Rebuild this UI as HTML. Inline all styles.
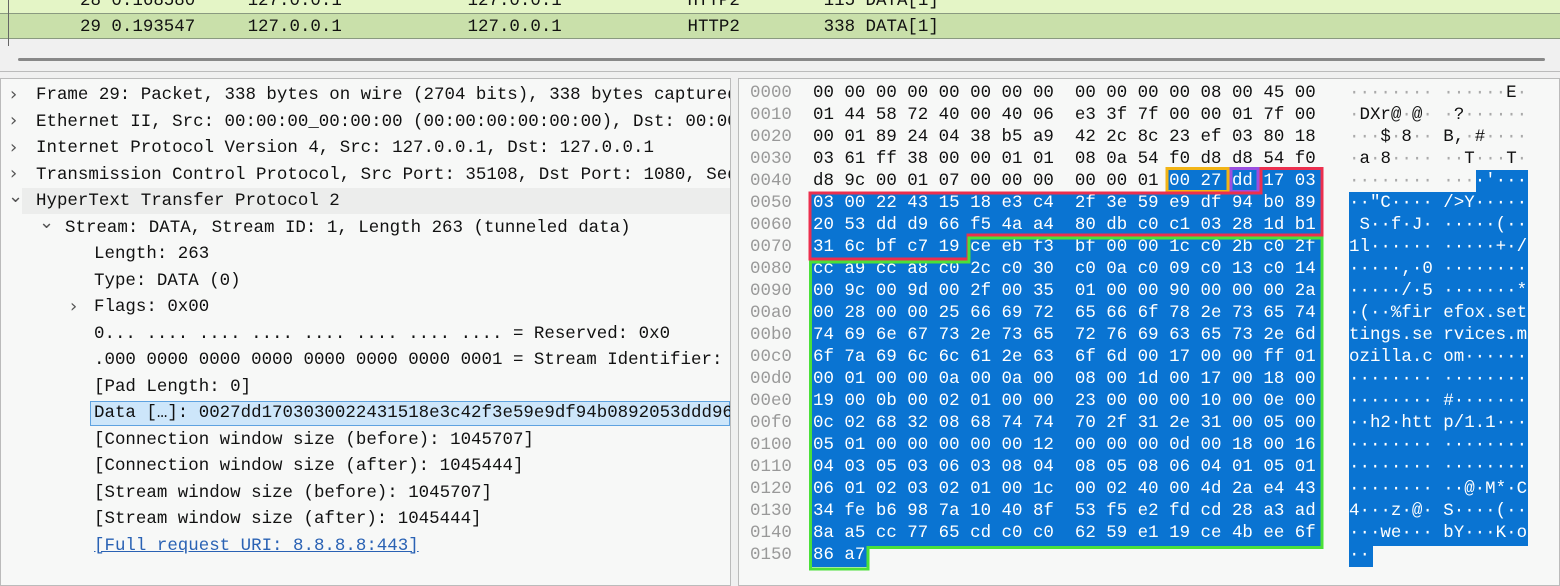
<!DOCTYPE html>
<html><head><meta charset="utf-8"><style>
*{margin:0;padding:0;box-sizing:border-box}
body{width:1560px;height:586px;overflow:hidden;background:#f0f0f0;position:relative;font-family:"Liberation Mono",monospace;font-size:17.47px;color:#111}
.a{position:absolute;white-space:pre;line-height:22px}
.t{position:absolute;white-space:pre;line-height:26px}
.w{color:#fff}
.g{color:#999}
.d{color:#aaa}
.ar{position:absolute;color:#555;font-family:"DejaVu Sans",sans-serif;font-size:18px;line-height:26px}
</style></head><body>
<!-- packet list -->
<div style="position:absolute;left:0;top:0;width:1560px;height:14px;background:#e4f5c6"></div>
<div style="position:absolute;left:0;top:13px;width:1560px;height:26px;background:#c9e0aa;border-top:1px solid #8a9a80;border-bottom:1px solid #8a9a80"></div>
<div style="position:absolute;left:0;top:40px;width:1560px;height:32px;background:#f0f0f0"></div>
<div style="position:absolute;left:8px;top:0;width:1px;height:46px;background:#666"></div>
<div class="t" style="left:80px;top:-12px">28 0.168580     127.0.0.1            127.0.0.1            HTTP2        115 DATA[1]</div>
<div class="t" style="left:80px;top:14px">29 0.193547     127.0.0.1            127.0.0.1            HTTP2        338 DATA[1]</div>
<div style="position:absolute;left:18px;top:58px;width:1527px;height:3px;background:#888;border-radius:2px"></div>
<div style="position:absolute;left:0;top:71px;width:1560px;height:1px;background:#bbb"></div>
<!-- left pane -->
<div style="position:absolute;left:0;top:78px;width:731px;height:508px;background:#f7f8f7;border:1px solid #bbb"></div>
<div style="position:absolute;left:22px;top:188px;width:708px;height:26px;background:#ecedec"></div>
<div style="position:absolute;left:90px;top:401px;width:640px;height:25px;background:#cde6fa;border:1px solid #5ea2e0"></div>
<div class="ar" style="left:10px;top:82px">›</div>
<div class="ar" style="left:10px;top:108px">›</div>
<div class="ar" style="left:10px;top:135px">›</div>
<div class="ar" style="left:10px;top:161px">›</div>
<div class="ar" style="left:8px;top:184px">⌄</div>
<div class="ar" style="left:39px;top:210px">⌄</div>
<div class="ar" style="left:70px;top:294px">›</div>
<div style="position:absolute;left:0;top:82px;width:730px;height:480px;overflow:hidden">
<div class="t" style="left:36px;top:0">Frame 29: Packet, 338 bytes on wire (2704 bits), 338 bytes captured</div>
<div class="t" style="left:36px;top:26.5px">Ethernet II, Src: 00:00:00_00:00:00 (00:00:00:00:00:00), Dst: 00:00</div>
<div class="t" style="left:36px;top:53px">Internet Protocol Version 4, Src: 127.0.0.1, Dst: 127.0.0.1</div>
<div class="t" style="left:36px;top:79.5px">Transmission Control Protocol, Src Port: 35108, Dst Port: 1080, Seq</div>
<div class="t" style="left:36px;top:106px">HyperText Transfer Protocol 2</div>
<div class="t" style="left:65px;top:132.5px">Stream: DATA, Stream ID: 1, Length 263 (tunneled data)</div>
<div class="t" style="left:94px;top:159px">Length: 263</div>
<div class="t" style="left:94px;top:185.5px">Type: DATA (0)</div>
<div class="t" style="left:94px;top:212px">Flags: 0x00</div>
<div class="t" style="left:94px;top:238.5px">0... .... .... .... .... .... .... .... = Reserved: 0x0</div>
<div class="t" style="left:94px;top:265px">.000 0000 0000 0000 0000 0000 0000 0001 = Stream Identifier: 1</div>
<div class="t" style="left:94px;top:291.5px">[Pad Length: 0]</div>
<div class="t" style="left:94px;top:318px">Data […]: 0027dd1703030022431518e3c42f3e59e9df94b0892053ddd9663</div>
<div class="t" style="left:94px;top:344.5px">[Connection window size (before): 1045707]</div>
<div class="t" style="left:94px;top:371px">[Connection window size (after): 1045444]</div>
<div class="t" style="left:94px;top:397.5px">[Stream window size (before): 1045707]</div>
<div class="t" style="left:94px;top:424px">[Stream window size (after): 1045444]</div>
<div class="t" style="left:94px;top:450.5px;color:#2a62b4;text-decoration:underline">[Full request URI: 8.8.8.8:443]</div>
</div>
<!-- right pane -->
<div style="position:absolute;left:738px;top:78px;width:822px;height:508px;background:#f7f8f7;border:1px solid #bbb"></div>
<div style="position:absolute;left:1166px;top:170px;width:155px;height:23px;background:#0a74d2"></div>
<div style="position:absolute;left:811px;top:192px;width:510px;height:354px;background:#0a74d2"></div>
<div style="position:absolute;left:811px;top:545px;width:56px;height:22px;background:#0a74d2"></div>
<div style="position:absolute;left:1476px;top:170px;width:52px;height:23px;background:#0a74d2"></div>
<div style="position:absolute;left:1349px;top:192px;width:179px;height:354px;background:#0a74d2"></div>
<div style="position:absolute;left:1349px;top:545px;width:24px;height:22px;background:#0a74d2"></div>
<div style="position:absolute;left:750px;top:82px;">
<div class="a g">0000
0010
0020
0030
0040
0050
0060
0070
0080
0090
00a0
00b0
00c0
00d0
00e0
00f0
0100
0110
0120
0130
0140
0150</div></div>
<div class="a" style="left:813px;top:82px">00 00 00 00 00 00 00 00  00 00 00 00 08 00 45 00
01 44 58 72 40 00 40 06  e3 3f 7f 00 00 01 7f 00
00 01 89 24 04 38 b5 a9  42 2c 8c 23 ef 03 80 18
03 61 ff 38 00 00 01 01  08 0a 54 f0 d8 d8 54 f0
d8 9c 00 01 07 00 00 00  00 00 01 <span class="w">00 27 dd 17 03</span><span class="w">
03 00 22 43 15 18 e3 c4  2f 3e 59 e9 df 94 b0 89
20 53 dd d9 66 f5 4a a4  80 db c0 c1 03 28 1d b1
31 6c bf c7 19 ce eb f3  bf 00 00 1c c0 2b c0 2f
cc a9 cc a8 c0 2c c0 30  c0 0a c0 09 c0 13 c0 14
00 9c 00 9d 00 2f 00 35  01 00 00 90 00 00 00 2a
00 28 00 00 25 66 69 72  65 66 6f 78 2e 73 65 74
74 69 6e 67 73 2e 73 65  72 76 69 63 65 73 2e 6d
6f 7a 69 6c 6c 61 2e 63  6f 6d 00 17 00 00 ff 01
00 01 00 00 0a 00 0a 00  08 00 1d 00 17 00 18 00
19 00 0b 00 02 01 00 00  23 00 00 00 10 00 0e 00
0c 02 68 32 08 68 74 74  70 2f 31 2e 31 00 05 00
05 01 00 00 00 00 00 12  00 00 00 0d 00 18 00 16
04 03 05 03 06 03 08 04  08 05 08 06 04 01 05 01
06 01 02 03 02 01 00 1c  00 02 40 00 4d 2a e4 43
34 fe b6 98 7a 10 40 8f  53 f5 e2 fd cd 28 a3 ad
8a a5 cc 77 65 cd c0 c0  62 59 e1 19 ce 4b ee 6f
86 a7</span></div>
<div class="a" style="left:1349px;top:82px"><span class="d">········ ······</span>E<span class="d">·</span>
<span class="d">·</span>DXr@<span class="d">·</span>@<span class="d">·</span> <span class="d">·</span>?<span class="d">······</span>
<span class="d">···</span>$<span class="d">·</span>8<span class="d">··</span> B,<span class="d">·</span>#<span class="d">····</span>
<span class="d">·</span>a<span class="d">·</span>8<span class="d">····</span> <span class="d">··</span>T<span class="d">···</span>T<span class="d">·</span>
<span class="d">········ ···</span><span class="w">·'···
··"C···· />Y·····
 S··f·J· ·····(··
1l······ ·····+·/
·····,·0 ········
·····/·5 ·······*
·(··%fir efox.set
tings.se rvices.m
ozilla.c om······
········ ········
········ #·······
··h2·htt p/1.1···
········ ········
········ ········
········ ··@·M*·C
4···z·@· S····(··
···we··· bY···K·o
··</span></div>
<svg style="position:absolute;left:0;top:0" width="1560" height="586">
<rect x="1167" y="168.5" width="61" height="23" fill="none" stroke="#f2b416" stroke-width="3"/>
<rect x="1231" y="168.5" width="27" height="23" fill="none" stroke="#9a4fe0" stroke-width="3"/>
<polygon points="1261,168.5 1322,168.5 1322,235 968,235 968,259 810,259 810,193 1261,193" fill="none" stroke="#ec2f4e" stroke-width="3"/>
<polygon points="969,238 1322,238 1322,547.5 868,547.5 868,569 810.5,569 810.5,262 969,262" fill="none" stroke="#4be03a" stroke-width="3"/>
</svg>
</body></html>
